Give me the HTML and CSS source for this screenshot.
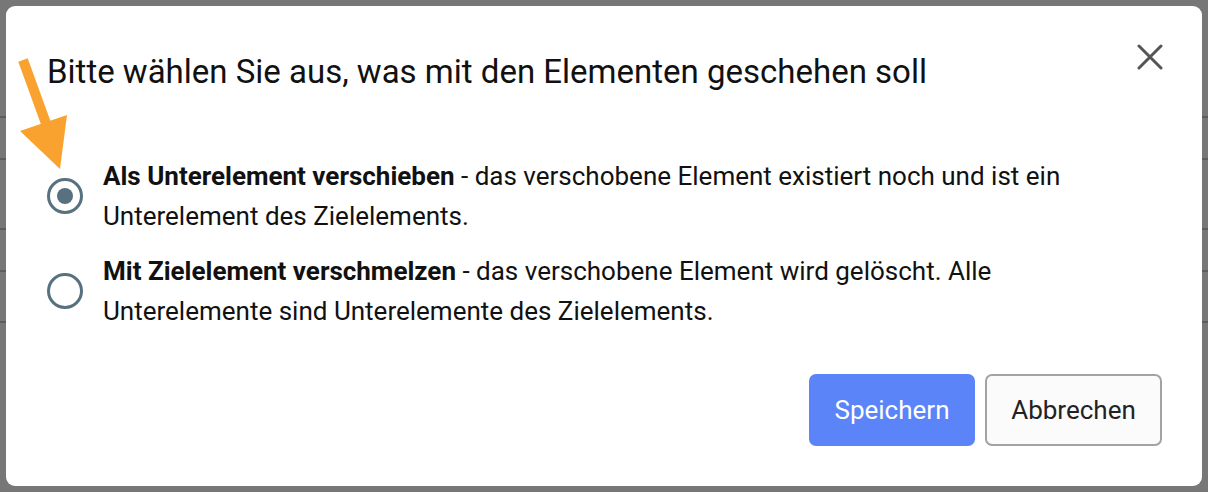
FILE: index.html
```html
<!DOCTYPE html>
<html lang="de">

    <head>
        <meta name="viewport" content="width=device-width, initial-scale=1">
        <title>Elemente verschieben</title>
        <link rel="stylesheet" href="styles.css">
    </head>

    <body>
        <div class="page" aria-hidden="true">
            <div class="row row-a"></div>
            <div class="row row-b"></div>
            <div class="row row-c"></div>
            <div class="row row-d"></div>
            <div class="row row-e"></div>
        </div>

        <div class="dialog" role="dialog" aria-labelledby="dialog-title">
            <header class="dialog-head">
                <h1 id="dialog-title">Bitte wählen Sie aus, was mit den Elementen geschehen soll</h1>
                <button class="close" aria-label="Schließen">
                    <svg width="26" height="26" viewBox="0 0 26 26">
                        <path d="M2 2 L24 24 M24 2 L2 24" stroke="#555" stroke-width="3" stroke-linecap="round" fill="none"/>
                    </svg>
                </button>
            </header>

            <div class="options">
                <label class="option">
                    <input type="radio" name="mode" checked>
                    <span class="radio"></span>
                    <span class="text"><b>Als Unterelement verschieben</b> - das verschobene Element existiert noch und ist ein Unterelement des Zielelements.</span>
                </label>
                <label class="option">
                    <input type="radio" name="mode">
                    <span class="radio"></span>
                    <span class="text"><b>Mit Zielelement verschmelzen</b> - das verschobene Element wird gelöscht. Alle Unterelemente sind Unterelemente des Zielelements.</span>
                </label>
            </div>

            <footer class="actions">
                <button class="btn btn-primary">Speichern</button>
                <button class="btn btn-secondary">Abbrechen</button>
            </footer>

            <!-- pointer arrow drawn over the first radio -->
            <svg class="arrow" width="70" height="120" viewBox="0 0 70 120">
                <line x1="17" y1="3" x2="42" y2="72" stroke="#f9a22f" stroke-width="10"/>
                <polygon points="14,74 61,58 54,112" fill="#f9a22f"/>
            </svg>
        </div>
    </body>

</html>
```

FILE: styles.css
```css
html {
    font-family: Roboto, "Liberation Sans", sans-serif;
}

body {
    margin: 0;
    width: 1208px;
    height: 492px;
    background-color: #777;
    position: relative;
    overflow: hidden;
}

.page {
    height: 100%;
}

.row {
    border-bottom: 2px solid #5c5c5c;
}

.row-a { height: 116px; }
.row-b { height: 40px; }
.row-c { height: 68px; }
.row-d { height: 40px; }
.row-e { height: 49px; }

.dialog {
    position: absolute;
    left: 6px;
    top: 6px;
    width: 1196px;
    height: 480px;
    box-sizing: border-box;
    background: #fff;
    border-radius: 9px;
    padding: 0 40px 0 41px;
    display: flex;
    flex-direction: column;
}

.dialog-head {
    display: flex;
    align-items: flex-start;
    justify-content: space-between;
    padding-top: 46px;

    & h1 {
        margin: 0;
        font-size: 33px;
        font-weight: 400;
        line-height: 40px;
        color: #111;
    }
}

.close {
    border: 0;
    background: none;
    padding: 0;
    margin: -8px -1px 0 0;
    cursor: pointer;
    width: 26px;
    height: 26px;
}

.options {
    margin-top: 64px;
    display: flex;
    flex-direction: column;
    gap: 15px;
}

.option {
    display: flex;
    align-items: center;
    gap: 20px;
    font-size: 26px;
    line-height: 40px;
    color: #111;

    & input {
        display: none;
    }

    & b {
        font-weight: 700;
    }
}

.radio {
    flex: none;
    width: 30px;
    height: 30px;
    border: 3.5px solid #57717f;
    border-radius: 50%;
    position: relative;
}

input:checked + .radio::after {
    content: "";
    position: absolute;
    left: 7px;
    top: 7px;
    width: 16px;
    height: 16px;
    border-radius: 50%;
    background: #57717f;
}

.text {
    max-width: 1000px;
}

.actions {
    margin-top: auto;
    margin-bottom: 40px;
    display: flex;
    justify-content: flex-end;
    gap: 10px;
}

.btn {
    font-family: inherit;
    font-size: 26px;
    height: 72px;
    border-radius: 7px;
    cursor: pointer;
}

.btn-primary {
    width: 166px;
    border: 0;
    background: #5b84f8;
    color: #fff;
}

.btn-secondary {
    width: 177px;
    border: 2px solid #a3a3a3;
    background: #fbfbfb;
    color: #222;
}

.arrow {
    position: absolute;
    left: 0;
    top: 51px;
}
```
